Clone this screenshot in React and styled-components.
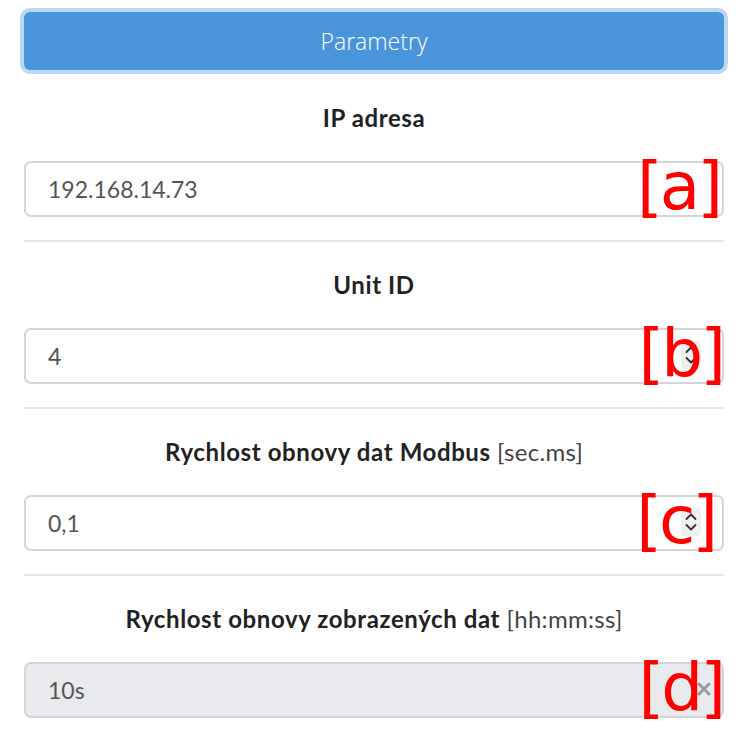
import React from "react"
import styled, { createGlobalStyle } from "styled-components"

const Global = createGlobalStyle`
  html, body {
    margin: 0;
    padding: 0;
    background: #fff;
  }
  body {
    font-family: Lato, "Open Sans", sans-serif;
    color: #222;
  }
`

const Page = styled.div`
  width: 746px;
  height: 730px;
  overflow: hidden;
  box-sizing: border-box;
  padding: 12px 22px 0 24px;
`

const Button = styled.button`
  display: block;
  width: 100%;
  height: 58px;
  margin: 0 0 5px;
  border: none;
  border-radius: 6px;
  background: #4a94dc;
  box-shadow: 0 0 0 4px #bad8f3;
  color: #fff;
  font-family: "Open Sans", sans-serif;
  font-weight: 300;
  font-size: 23px;
  cursor: pointer;
`

const Section = styled.section`
  padding-top: 29px;
  padding-bottom: 23px;
  border-bottom: ${p => (p.last ? "none" : "2px solid #e8e8e8")};
`

const Label = styled.div`
  text-align: center;
  font-size: 24px;
  line-height: 28px;
  font-weight: 700;
  letter-spacing: 0.6px;
  color: #222;

  span {
    font-weight: 400;
    letter-spacing: 0.3px;
    color: #444;
  }
`

const Field = styled.div`
  position: relative;
  margin-top: 29px;
`

const Input = styled.div`
  display: flex;
  align-items: center;
  height: 56px;
  box-sizing: border-box;
  padding: 0 22px;
  border: 2px solid #d2d5d9;
  border-radius: 7px;
  background: ${p => (p.disabled ? "#e9eaee" : "#fff")};
  font-size: 23px;
  color: #555;
`

const Spinner = styled.div`
  position: absolute;
  right: 23px;
  top: 13px;
  width: 20px;
  height: 28px;
  border-radius: 4px;
  background: #efefef;
  display: flex;
  align-items: center;
  justify-content: center;
`

const Clear = styled.div`
  position: absolute;
  right: 12px;
  top: 18px;
  width: 16px;
  height: 18px;
  display: flex;
  align-items: center;
  justify-content: center;
`

const Mark = styled.div`
  position: absolute;
  right: ${p => p.right}px;
  top: -7px;
  font-family: "DejaVu Sans", sans-serif;
  font-size: 66px;
  line-height: 66px;
  letter-spacing: -3px;
  color: #ff0000;
  pointer-events: none;
`

const Arrows = () => (
  <svg width="14" height="24" viewBox="0 0 14 24" fill="none" stroke="#333" strokeWidth="1.8" strokeLinecap="round" strokeLinejoin="round">
    <path d="M2.5 9 L7 4.5 L11.5 9" />
    <path d="M2.5 15 L7 19.5 L11.5 15" />
  </svg>
)

const Cross = () => (
  <svg width="14" height="14" viewBox="0 0 14 14" stroke="#9a9a9a" strokeWidth="3" strokeLinecap="round">
    <path d="M2 2 L12 12 M12 2 L2 12" />
  </svg>
)

const fields = [
  { label: "IP adresa", value: "192.168.14.73", mark: "a", right: 4 },
  { label: "Unit ID", value: "4", mark: "b", right: 1, spin: true },
  { label: "Rychlost obnovy dat Modbus", unit: "[sec.ms]", value: "0,1", mark: "c", right: 9, spin: true },
  { label: "Rychlost obnovy zobrazených dat", unit: "[hh:mm:ss]", value: "10s", mark: "d", right: 1, disabled: true },
]

export default function App() {
  return (
    <Page>
      <Global />
      <Button>Parametry</Button>
      {fields.map((f, i) => (
        <Section key={f.mark} last={i === fields.length - 1}>
          <Label>
            {f.label}
            {f.unit && <span> {f.unit}</span>}
          </Label>
          <Field>
            <Input disabled={f.disabled}>{f.value}</Input>
            {f.spin && (
              <Spinner>
                <Arrows />
              </Spinner>
            )}
            {f.disabled && (
              <Clear>
                <Cross />
              </Clear>
            )}
            <Mark right={f.right}>[{f.mark}]</Mark>
          </Field>
        </Section>
      ))}
    </Page>
  )
}
